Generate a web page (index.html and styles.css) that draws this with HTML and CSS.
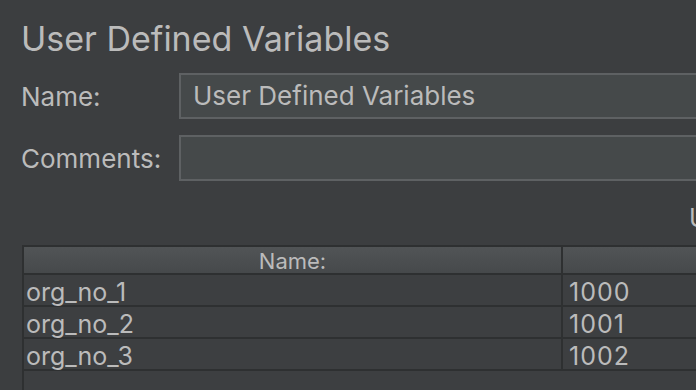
FILE: index.html
```html
<!doctype html>
<html lang="en">
<head>
	<meta charset="UTF-8">
	<title>User Defined Variables</title>
	<link rel="stylesheet" href="styles.css">
</head>
<body>
	<div class="panel">
		<h1 class="title">User Defined Variables</h1>
		<div class="field-row name-row">
			<label class="field-label">Name:</label>
			<div class="field">User Defined Variables</div>
		</div>
		<div class="field-row">
			<label class="field-label">Comments:</label>
			<div class="field"></div>
		</div>
		<div class="table-caption">User Defined Variables</div>
		<div class="table-wrap">
			<table class="vars">
				<thead>
					<tr>
						<th class="col-name">Name:</th>
						<th class="col-value"></th>
					</tr>
				</thead>
				<tbody>
					<tr>
						<td>org_no_1</td>
						<td class="num">1000</td>
					</tr>
					<tr>
						<td>org_no_2</td>
						<td class="num">1001</td>
					</tr>
					<tr>
						<td>org_no_3</td>
						<td class="num">1002</td>
					</tr>
				</tbody>
			</table>
		</div>
	</div>
</body>
</html>
```
FILE: styles.css
```css
html, body {
	margin: 0;
	height: 100%;
	overflow: hidden;
}
body {
	background-color: #3c3e40;
	color: #bbbbbb;
	font-family: "Inter", "DejaVu Sans", sans-serif;
}
.panel {
	padding-left: 21px;
	width: 760px;
}
.title {
	margin: 0;
	padding-top: 20px;
	height: 73px;
	box-sizing: border-box;
	font-size: 34px;
	font-weight: normal;
	line-height: 38px;
}
.field-row {
	display: flex;
	align-items: center;
	height: 46px;
}
.name-row {
	margin-bottom: 16px;
}
.field-label {
	width: 158px;
	font-size: 26px;
}
.field {
	flex: 1;
	height: 46px;
	box-sizing: border-box;
	border: 2px solid #5e6163;
	background-color: #45494a;
	padding-left: 12px;
	font-size: 26px;
	line-height: 42px;
}
.table-caption {
	height: 64px;
	box-sizing: border-box;
	padding-top: 23px;
	text-indent: 668px;
	white-space: nowrap;
	font-size: 25px;
	line-height: 28px;
}
.table-wrap {
	margin-left: 1px;
	border-top: 2px solid #2e3031;
	border-left: 2px solid #2e3031;
	height: 200px;
	background-color: #3d3f41;
}
.vars {
	border-collapse: collapse;
	width: 760px;
	font-size: 25px;
}
.vars th {
	height: 23px;
	padding: 3px 0 0 0;
	font-weight: normal;
	font-size: 22px;
	line-height: 23px;
	background: linear-gradient(#515456, #46494b);
	border-bottom: 2px solid #2e3031;
}
.vars .col-name {
	width: 537px;
	border-right: 2px solid #2e3031;
}
.vars td {
	height: 25px;
	padding: 5px 0 0 2px;
	line-height: 25px;
	border-bottom: 2px solid #2e3031;
}
.vars td:first-child {
	border-right: 2px solid #2e3031;
}
.vars td.num {
	padding-left: 6px;
	letter-spacing: 1px;
}
```
